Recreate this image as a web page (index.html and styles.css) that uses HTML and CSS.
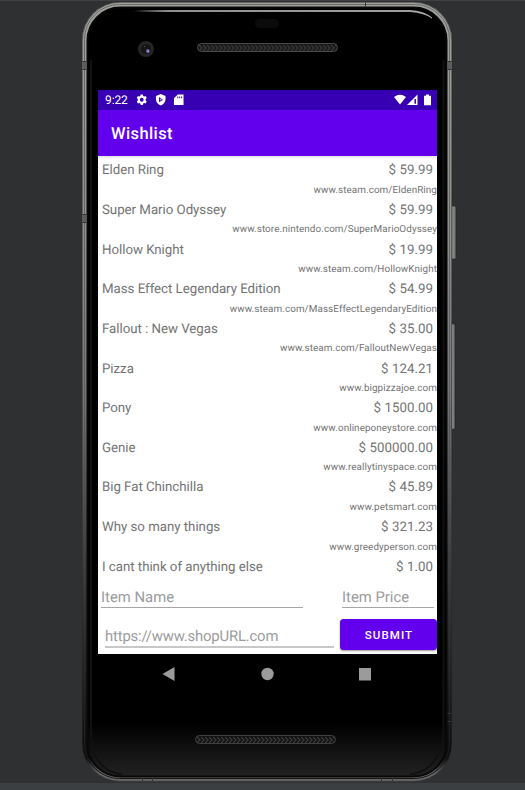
FILE: index.html
```html
<!DOCTYPE html>
<html lang="en">
<head>
<meta charset="utf-8">
<title>Wishlist</title>
<link rel="stylesheet" href="styles.css">
</head>
<body>
<main class="stage">
<svg class="device" width="525" height="790" viewBox="0 0 525 790" aria-hidden="true">
  <defs>
    <linearGradient id="rim" x1="0" y1="0" x2="0" y2="1">
      <stop offset="0" stop-color="#a0a09d"/><stop offset=".3" stop-color="#8e8e8e"/><stop offset=".5" stop-color="#747474"/><stop offset=".72" stop-color="#3c3c3c"/><stop offset=".86" stop-color="#202020"/><stop offset=".97" stop-color="#0c0c0c"/><stop offset=".99" stop-color="#666"/>
    </linearGradient>
    <linearGradient id="groove" x1="0" y1="0" x2="0" y2="1">
      <stop offset="0" stop-color="#6a6a68"/><stop offset=".5" stop-color="#606060"/><stop offset="1" stop-color="#161616"/>
    </linearGradient>
    <linearGradient id="face" x1="0" y1="0" x2="0" y2="1">
      <stop offset="0" stop-color="#000"/><stop offset=".93" stop-color="#000"/><stop offset="1" stop-color="#222"/>
    </linearGradient>
    <linearGradient id="shine"><stop offset="0" stop-color="#aaa" stop-opacity="0"/><stop offset=".12" stop-color="#aaa"/><stop offset="1" stop-color="#bbb"/></linearGradient>
    <linearGradient id="key"><stop offset="0" stop-color="#555"/><stop offset=".5" stop-color="#8b8b8b"/><stop offset="1" stop-color="#666"/></linearGradient>
    <pattern id="mesh" width="4" height="6" patternUnits="userSpaceOnUse"><path d="M0 0l3 3-3 3" fill="none" stroke="#3c3c3c" stroke-width="1.200"/></pattern>
  </defs>
  <path d="M0 .5H525" stroke="#3f4143"/>
  <path d="M0 786.500H525" stroke="#3c3f41" stroke-width="7"/>
  <rect x="450" y="206" width="6" height="53" rx="1.500" fill="url(#key)" stroke="#242424" stroke-width=".6"/>
  <rect x="450" y="324" width="5" height="105" rx="1.500" fill="url(#key)" stroke="#242424" stroke-width=".6"/>
  <rect x="82" y="2" width="370" height="779.500" rx="38" fill="url(#rim)"/>
  <rect x="84.500" y="4.500" width="365" height="774" rx="35" fill="none" stroke="url(#groove)"/>
  <rect x="82.300" y="2.300" width="369.400" height="779" rx="38" fill="none" stroke="#2a2a2a" stroke-width=".6"/>
  <rect x="87.500" y="7.500" width="359" height="769" rx="33" fill="url(#face)" stroke="#080808" stroke-width="2"/>
  <path d="M91 60V735Q92 770 122 774.500M443.500 60V735Q440 770 410 774.500" fill="none" stroke="#111" stroke-width="2"/>
  <path d="M134 10.500H410Q424 11 432 18Q424 12.500 410 11.500H134Z" fill="url(#shine)" stroke="url(#shine)" stroke-width=".7"/>
  <path d="M82.500 62h4v8h-4zM82.500 215h4v8h-4zM447.500 62h4v8h-4z" fill="#5c5c5c"/>
  <path d="M82.500 61.500h4M82.500 69.500h4M82.500 214.500h4M82.500 222.500h4M447.500 61.500h4M447.500 69.500h4M447.500 713.500h4M447.500 721.500h4M365.500 2.500v4M142.500 778v3M152.500 778v3M381.500 778v3M392.500 778v3" stroke="#333"/>
  <rect x="255" y="19" width="24" height="9" rx="4.500" fill="#0b0b0b"/>
  <circle cx="146" cy="49" r="8" fill="#252525"/><circle cx="146" cy="49" r="5.500" fill="#151515" stroke="#333" stroke-width=".5"/>
  <circle cx="147.800" cy="51" r="1.900" fill="#675aa0"/><circle cx="148.200" cy="51.200" r=".8" fill="#c8c0f4"/><circle cx="144.500" cy="46.500" r=".6" fill="#675aa0"/>
  <rect x="197.500" y="43.500" width="140" height="8" rx="4" fill="#181818" stroke="#484848"/>
  <svg x="199" y="45" width="137" height="6"><rect width="137" height="6" fill="url(#mesh)"/></svg>
  <rect x="195.500" y="735.500" width="140" height="8" rx="4" fill="#141414" stroke="#404040"/>
  <svg x="197" y="737" width="137" height="6"><rect width="137" height="6" fill="url(#mesh)"/></svg>
</svg>
<section class="screen">
  <header class="status">
    <span class="clock">9:22</span>
    <svg class="sicon" viewBox="0 0 24 24"><path fill-rule="evenodd" d="M9.600 1h4.800l.6 3 2 1.200 3-1L22.400 8.300 20.200 10.400v3.200l2.200 2.100-2.400 4.100-3-1-2 1.200-.6 3H9.600l-.6-3-2-1.200-3 1-2.400-4.100 2.200-2.100v-3.200L1.600 8.300 4 4.200l3 1 2-1.200zM12 8a4 4 0 1 0 0 8 4 4 0 0 0 0-8z"/></svg>
    <svg class="sicon" viewBox="0 0 24 24"><path fill-rule="evenodd" d="M12 0L22 4v7c0 6-4 11-10 13C6 22 2 17 2 11V4zM8.500 6.500v10.500l8-5.200z"/><path d="M11 9.500v4l3-2z"/></svg>
    <svg class="sicon" viewBox="0 0 24 24"><path fill-rule="evenodd" d="M10 1h12v22H2V9zM9 5v4h2V5zm4 0v4h2V5zm4 0v4h2V5z"/></svg>
    <svg class="signals" viewBox="0 0 37 12"><path d="M0 3Q6 -1.500 12 3L6 10.500zM23.500 .6v10.400H13zM30 1.800h2V.6h3v1.200h2v9.400h-7z"/><path d="M20.500 5h1.500v4.800h-1.500z" fill="#3700b3"/></svg>
  </header>
  <h1 class="appbar">Wishlist</h1>
  <div class="content">
  <ul class="list">
    <li><b>Elden Ring</b><i>$ 59.99</i><small>www.steam.com/EldenRing</small></li>
    <li><b>Super Mario Odyssey</b><i>$ 59.99</i><small>www.store.nintendo.com/SuperMarioOdyssey</small></li>
    <li><b>Hollow Knight</b><i>$ 19.99</i><small>www.steam.com/HollowKnight</small></li>
    <li><b>Mass Effect Legendary Edition</b><i>$ 54.99</i><small>www.steam.com/MassEffectLegendaryEdition</small></li>
    <li><b>Fallout : New Vegas</b><i>$ 35.00</i><small>www.steam.com/FalloutNewVegas</small></li>
    <li><b>Pizza</b><i>$ 124.21</i><small>www.bigpizzajoe.com</small></li>
    <li><b>Pony</b><i>$ 1500.00</i><small>www.onlineponeystore.com</small></li>
    <li><b>Genie</b><i>$ 500000.00</i><small>www.reallytinyspace.com</small></li>
    <li><b>Big Fat Chinchilla</b><i>$ 45.89</i><small>www.petsmart.com</small></li>
    <li><b>Why so many things</b><i>$ 321.23</i><small>www.greedyperson.com</small></li>
    <li><b>I cant think of anything else</b><i>$ 1.00</i></li>
  </ul>
  <form class="form">
    <div class="line"><span class="field name">Item Name</span><span class="field price">Item Price</span></div>
    <div class="line second"><span class="field url">https://www.shopURL.com</span><button type="button">SUBMIT</button></div>
  </form>
  </div>
  <nav class="nav">
    <svg viewBox="0 0 339 40"><path d="M64.500 20L76.500 13v14z"/><circle cx="169.500" cy="20" r="6.200"/><path d="M261 14h12v12.500h-12z"/></svg>
  </nav>
</section>
</main>
</body>
</html>
```
FILE: styles.css
```css
* { box-sizing: border-box; }
body { margin: 0; background: #2f3032; font-family: Roboto, sans-serif; overflow: hidden; text-rendering: geometricPrecision; }
.stage { position: relative; width: 525px; height: 790px; padding: 90px 0 0 98px; }
.device { position: absolute; left: 0; top: 0; }
.screen { position: relative; width: 339px; }
.status { height: 20px; background: #3700b3; display: flex; align-items: center; padding: 0 6px 0 7px; color: #fff; }
.clock { font-size: 12px; width: 31px; letter-spacing: -0.1px; line-height: 21px; }
.sicon { width: 11.500px; height: 11.500px; margin-right: 7px; fill: #fff; }
.signals { width: 37px; height: 12px; margin-left: auto; fill: #fff; }
.appbar { margin: 0; height: 46px; line-height: 49px; padding-left: 13px; background: #6200ee; color: #fff; font-size: 16.500px; font-weight: 500; letter-spacing: 0.4px; }
.content { height: 498px; background: linear-gradient(#e2e2e2, #fff 3px); overflow: hidden; }
.list { list-style: none; margin: 0; padding: 0.300px 0 0; height: 422px; color: #747474; }
.list li { height: 39.650px; display: grid; grid-template-columns: 1fr auto; grid-template-rows: 27.500px 11px; }
.list b, .list i { font: 400 13.300px/30px Roboto, sans-serif; letter-spacing: -0.040px; white-space: nowrap; }
.list b { padding-left: 4px; }
.list i { padding-right: 4px; letter-spacing: 0.030px; }
.list small { grid-column: 1 / 3; text-align: right; font-size: 9.900px; line-height: 13px; letter-spacing: 0.080px; }
.form { display: flex; flex-direction: column; }
.line { display: flex; justify-content: space-between; padding: 0 3px; }
.field { height: 30px; line-height: 38px; font-size: 14.850px; color: #9c9c9c; border-bottom: 1px solid #a6a6a6; }
.name { width: 202px; }
.price { width: 92px; }
.line.second { padding: 11px 0 0 7px; }
.url { width: 229px; height: 29px; line-height: 35px; letter-spacing: -0.170px; border-bottom: 2px solid #c8c8c8; }
button { width: 97px; height: 31px; border: 0; border-radius: 3.500px; padding: 0 0 0 1px; background: #6200ee; color: #fff; font: 500 11.550px Roboto, sans-serif; letter-spacing: 1.050px; box-shadow: 0 1px 2px #0006; }
.nav { height: 40px; background: #000; }
.nav svg { display: block; width: 339px; height: 40px; fill: #9b9b9b; }
```
